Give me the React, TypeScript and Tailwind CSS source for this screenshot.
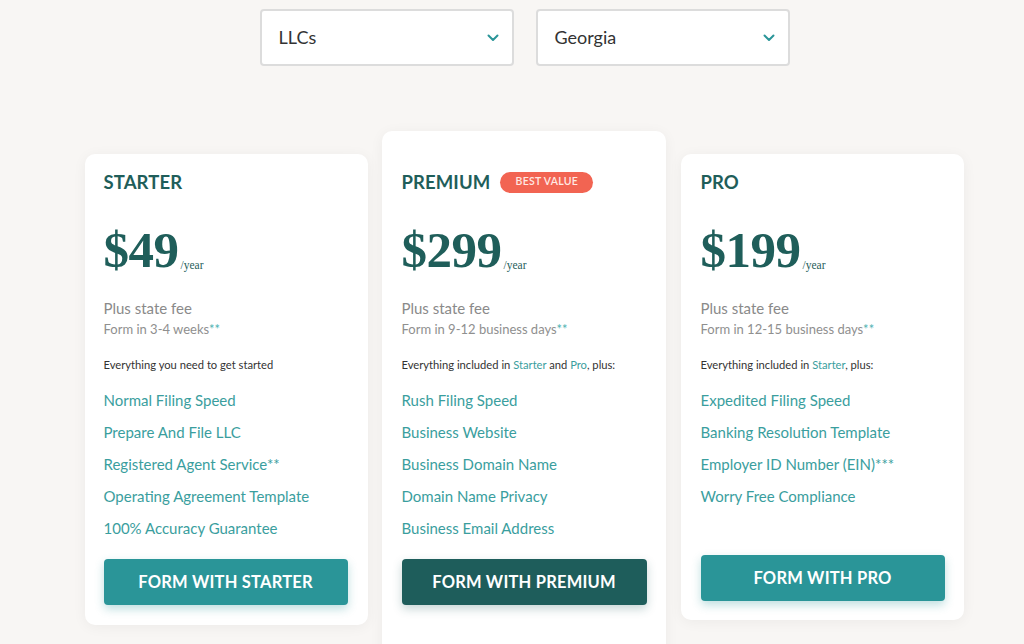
import React from "react";

const lato = { fontFamily: "Lato, 'Noto Sans', sans-serif" };

function Chevron() {
  return (
    <svg width="12" height="8" viewBox="0 0 12 8" fill="none">
      <path d="M1.5 1.5 L6 6 L10.5 1.5" stroke="#2a9598" strokeWidth="2" strokeLinecap="round" strokeLinejoin="round" />
    </svg>
  );
}

function Select({ label }: { label: string }) {
  return (
    <div className="w-[254px] h-[57px] bg-white border-2 border-[#dcdcdc] rounded-[4px] flex items-center justify-between pl-[17px] pr-[13px]">
      <span className="text-[18px] text-[#333]">{label}</span>
      <Chevron />
    </div>
  );
}

type Plan = {
  name: string;
  price: string;
  form: string;
  intro: React.ReactNode;
  features: React.ReactNode[];
  button: string;
  dark?: boolean;
  badge?: boolean;
};

function Card({ plan, variant }: { plan: Plan; variant: "starter" | "premium" | "pro" }) {
  const cardCls =
    variant === "premium"
      ? "w-[284px] ml-[14px] mr-[15px] bg-white rounded-[10px] shadow-[0_2px_14px_rgba(0,0,0,0.05)] pt-[39px] pb-[60px] pl-[20px] pr-[19px] flex flex-col"
      : variant === "starter"
      ? "w-[283px] mt-[23px] bg-white rounded-[10px] shadow-[0_2px_14px_rgba(0,0,0,0.05)] pt-[16px] pb-[20px] pl-[19px] pr-[20px] flex flex-col"
      : "w-[283px] mt-[23px] bg-white rounded-[10px] shadow-[0_2px_14px_rgba(0,0,0,0.05)] pt-[16px] pb-[19px] pl-[20px] pr-[19px] flex flex-col";
  return (
    <div className={cardCls}>
      <div className="flex items-center h-[24px]">
        <span className="text-[18.5px] leading-[24px] font-bold text-[#1f5e5a] tracking-[0.1px]">{plan.name}</span>
        {plan.badge && (
          <span className="ml-[10px] w-[93px] h-[21px] rounded-full bg-[#f26452] text-[#ffe9e4] text-[10.5px] font-semibold flex items-center justify-center tracking-[0.3px]">
            BEST VALUE
          </span>
        )}
      </div>
      <div className="mt-[32px] flex items-baseline h-[48px]" style={{ fontFamily: "'Liberation Serif', 'DejaVu Serif', serif" }}>
        <span className="text-[51px] leading-[48px] font-bold text-[#1f5e5a] tracking-[-0.5px]">{plan.price}</span>
        <span className="text-[11.5px] text-[#1f5e5a] ml-[2px] relative top-[2px]">/year</span>
      </div>
      <div className="mt-[24px] text-[15px] leading-[20px] text-[#8a8a8a]">Plus state fee</div>
      <div className="mt-[2px] text-[13px] leading-[18px] text-[#8f8f8f]">
        {plan.form}
        <span className="text-[#4fb3b3]">**</span>
      </div>
      <div className="mt-[19px] text-[11.2px] leading-[16px] text-[#333]">{plan.intro}</div>
      <ul className="mt-[11px]">
        {plan.features.map((f, i) => (
          <li key={i} className="text-[15px] leading-[32px] text-[#3a9e9e]">
            {f}
          </li>
        ))}
      </ul>
      <button
        className={
          (plan.dark
            ? "bg-[#1e5d5b] shadow-[0_4px_10px_rgba(30,93,91,0.25)] "
            : "bg-[#2a9598] shadow-[0_4px_10px_rgba(42,149,152,0.3)] ") +
          (variant === "pro" ? "mt-[43px] " : "mt-[15px] ") +
          "h-[46px] w-full rounded-[4px] text-white text-[16.5px] font-bold tracking-[0.2px]"
        }
        style={lato}
      >
        {plan.button}
      </button>
    </div>
  );
}

const T = ({ children }: { children: React.ReactNode }) => (
  <span className="text-[#3a9e9e]">{children}</span>
);

const plans: Plan[] = [
  {
    name: "STARTER",
    price: "$49",
    form: "Form in 3-4 weeks",
    intro: "Everything you need to get started",
    features: [
      "Normal Filing Speed",
      "Prepare And File LLC",
      "Registered Agent Service**",
      "Operating Agreement Template",
      "100% Accuracy Guarantee",
    ],
    button: "FORM WITH STARTER",
  },
  {
    name: "PREMIUM",
    price: "$299",
    form: "Form in 9-12 business days",
    intro: (
      <>
        Everything included in <T>Starter</T> and <T>Pro</T>, plus:
      </>
    ),
    features: [
      "Rush Filing Speed",
      "Business Website",
      "Business Domain Name",
      "Domain Name Privacy",
      "Business Email Address",
    ],
    button: "FORM WITH PREMIUM",
    dark: true,
    badge: true,
  },
  {
    name: "PRO",
    price: "$199",
    form: "Form in 12-15 business days",
    intro: (
      <>
        Everything included in <T>Starter</T>, plus:
      </>
    ),
    features: [
      "Expedited Filing Speed",
      "Banking Resolution Template",
      "Employer ID Number (EIN)***",
      "Worry Free Compliance",
    ],
    button: "FORM WITH PRO",
  },
];

export default function App() {
  return (
    <div className="w-[1024px] h-[644px] overflow-hidden bg-[#f8f6f4]" style={lato}>
      <div className="flex justify-center gap-[22px] pt-[9px] pl-[25px]">
        <Select label="LLCs" />
        <Select label="Georgia" />
      </div>
      <div className="flex justify-center items-start mt-[65px] pl-[24px]">
        <Card plan={plans[0]} variant="starter" />
        <Card plan={plans[1]} variant="premium" />
        <Card plan={plans[2]} variant="pro" />
      </div>
    </div>
  );
}
